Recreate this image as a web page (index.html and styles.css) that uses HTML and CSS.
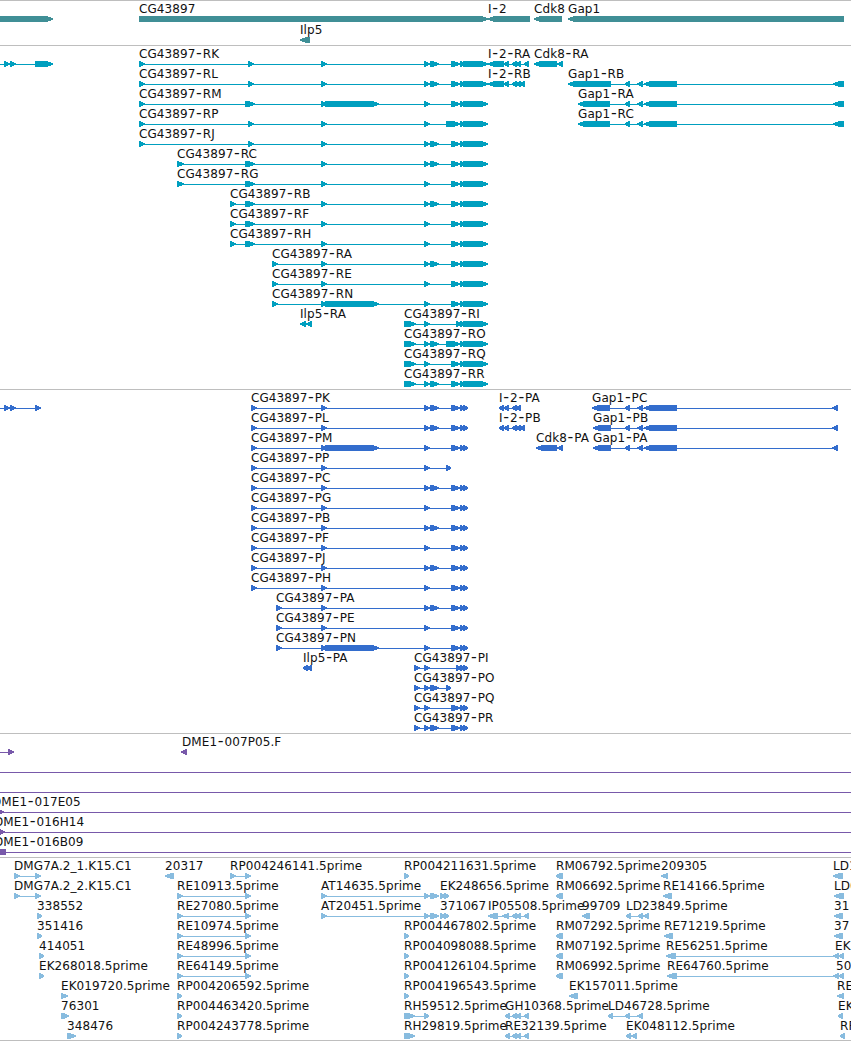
FILE: index.html
```html
<!DOCTYPE html>
<html lang="en">
<head>
<meta charset="utf-8">
<title>Genome browser</title>
<link rel="stylesheet" href="styles.css">
</head>
<body>
<main class="browser">
  <section class="track track-gene" id="gene"></section>
  <section class="track track-mrna" id="mrna"></section>
  <section class="track track-cds" id="cds"></section>
  <section class="track track-bac" id="bac"></section>
  <section class="track track-est" id="est"></section>
</main>
<script src="tracks.js"></script>
</body>
</html>
```
FILE: styles.css
```css
body {
  margin: 0;
  background: #fff;
}

.browser {
  display: flex;
  flex-direction: column;
  width: 851px;
  height: 1041px;
  overflow: hidden;
  box-sizing: border-box;
  border-bottom: 1px solid #bebebe;
}

.track {
  flex: none;
  box-sizing: border-box;
  border-top: 1px solid #bebebe;
  overflow: hidden;
}

.track-gene { height: 45px; color: #408f96; }
.track-mrna { height: 344px; color: #009fbf; }
.track-cds { height: 344px; color: #336dcd; }
.track-bac { height: 124px; color: #7859aa; }
.track-est { height: 183px; color: #88bcdf; }

.canvas {
  display: block;
  width: 851px;
  height: 100%;
}

.shape {
  fill: currentColor;
  shape-rendering: crispEdges;
}

.label {
  fill: #111;
  font: 12px "DejaVu Sans", sans-serif;
  letter-spacing: 0.08px;
}

.dash {
  font-size: 16px;
}
```
FILE: tracks.js
```js
const NS = "http://www.w3.org/2000/svg";

function node(parent, tag, attrs) {
  const el = document.createElementNS(NS, tag);
  for (const key in attrs) el.setAttribute(key, attrs[key]);
  parent.appendChild(el);
  return el;
}

// Exon with its tip in the direction of transcription.
function exon(svg, start, end, y, strand) {
  const width = end - start;
  const tip = width < 8 ? width - 1 : Math.min(6, width - 3);
  const shoulder = end - tip;
  const lower = y + 6;
  let points;
  if (strand === "=") {
    points = [[start, y], [end, y], [end, lower], [start, lower]];
  } else if (strand === "+") {
    points = [[start, y], [shoulder, y], [end, y + 2.2], [end, y + 3.8], [shoulder, lower], [start, lower]];
  } else {
    points = [[end, y], [start + tip, y], [start, y + 2.2], [start, y + 3.8], [start + tip, lower], [end, lower]];
  }
  node(svg, "polygon", { class: "shape", points: points.join(" ") });
}

// Label with wide hyphens.
function label(svg, x, y, value) {
  const text = node(svg, "text", { class: "label", x: x, y: y });
  value.split("-").forEach((part, i) => {
    if (i > 0) node(text, "tspan", { class: "dash", dx: 0.7 }).textContent = "-";
    node(text, "tspan", i > 0 ? { dx: 0.8 } : {}).textContent = part;
  });
}

// Feature: "row label x strand exons", exons as start-end pairs, "_" for no label.
function draw(id, base, step, source) {
  const svg = node(document.getElementById(id), "svg", { class: "canvas" });
  for (const line of source.trim().split("\n")) {
    const [row, name, x, strand, list] = line.trim().split(/\s+/);
    const y = base + row * step;
    if (list) {
      const exons = list.split(",").map(p => p.split(":").map(Number));
      const from = exons[0][0];
      const to = exons[exons.length - 1][1];
      node(svg, "rect", { class: "shape", x: from, y: y, width: to - from, height: 1 });
      exons.forEach(([a, b]) => exon(svg, a, b, y - 3, strand));
    }
    if (name !== "_") label(svg, x, y - 6, name);
  }
}

draw("gene", 18, 21, `
0 _ 0 + -20:53
0 CG43897 139 + 139:488
0 I-2 488 - 488:530
0 Cdk8 534 - 534:562
0 Gap1 568 - 568:844
1 Ilp5 300 - 300:310
`);

const END = "451:460,460:464,463:488";
const GAP = "625:630,637:643,644:677,833:844";
draw("mrna", 18, 20, `
0 _ 0 + -9:-4,4:10,10:16,35:53
0 CG43897-RK 139 + 139:145,248:254,321:327,424:430,430:439,${END}
1 CG43897-RL 139 + 139:145,248:254,321:327,424:430,430:439,${END}
2 CG43897-RM 139 + 139:145,245:255,321:327,325:379,424:430,${END}
3 CG43897-RP 139 + 139:145,248:254,321:327,424:430,446:460,460:464,463:488
4 CG43897-RJ 139 + 139:145,248:254,321:327,424:430,430:439,${END}
5 CG43897-RC 177 + 177:184,245:255,321:327,424:430,430:439,${END}
6 CG43897-RG 177 + 177:184,245:255,321:327,424:430,${END}
7 CG43897-RB 230 + 230:236,245:255,321:327,424:430,430:439,${END}
8 CG43897-RF 230 + 230:236,245:255,321:327,424:430,${END}
9 CG43897-RH 230 + 230:236,245:255,321:327,424:430,${END}
10 CG43897-RA 272 + 272:278,321:327,424:430,430:439,${END}
11 CG43897-RE 272 + 272:278,321:327,424:430,${END}
12 CG43897-RN 272 + 272:278,321:327,325:379,424:430,${END}
13 CG43897-RI 404 + 404:416,424:430,456:461,460:464,463:488
14 CG43897-RO 404 + 404:416,424:430,430:439,446:460,460:464,463:488
15 CG43897-RQ 404 + 404:416,424:430,${END}
16 CG43897-RR 404 + 404:416,424:430,430:439,${END}
13 Ilp5-RA 300 - 300:306,306:312
0 I-2-RA 488 - 488:504,504:509,512:517,516:521,524:529
1 I-2-RB 488 - 488:504,504:509,512:517,516:521,520:525
0 Cdk8-RA 534 - 534:557,557:563
1 Gap1-RB 568 - 568:611,${GAP}
2 Gap1-RA 578 - 578:610,${GAP}
3 Gap1-RC 578 - 578:610,${GAP}
`);

const CEND = "451:460,460:464,463:468";
const CGAP = "625:630,637:643,644:677,832:838";
draw("cds", 18, 20, `
0 _ 0 + -9:-4,4:10,10:16,35:41
0 CG43897-PK 251 + 251:257,321:327,424:430,430:439,${CEND}
1 CG43897-PL 251 + 251:257,321:327,424:430,430:439,${CEND}
2 CG43897-PM 251 + 251:257,321:327,325:379,424:430,${CEND}
3 CG43897-PP 251 + 251:257,321:327,424:430,446:451
4 CG43897-PC 251 + 251:257,321:327,424:430,430:439,${CEND}
5 CG43897-PG 251 + 251:257,321:327,424:430,${CEND}
6 CG43897-PB 251 + 251:257,321:327,424:430,430:439,${CEND}
7 CG43897-PF 251 + 251:257,321:327,424:430,${CEND}
8 CG43897-PJ 251 + 251:257,321:327,424:430,430:439,${CEND}
9 CG43897-PH 251 + 251:257,321:327,424:430,${CEND}
10 CG43897-PA 276 + 276:282,321:327,424:430,430:439,${CEND}
11 CG43897-PE 276 + 276:282,321:327,424:430,${CEND}
12 CG43897-PN 276 + 276:282,321:327,325:379,424:430,${CEND}
13 CG43897-PI 414 + 414:420,424:430,456:461,460:464,463:468
14 CG43897-PO 414 + 414:420,424:430,430:439,446:451
15 CG43897-PQ 414 + 414:420,424:430,${CEND}
16 CG43897-PR 414 + 414:420,424:430,430:439,${CEND}
13 Ilp5-PA 303 - 303:308,307:312
0 I-2-PA 499 - 499:504,504:509,512:517,516:521
1 I-2-PB 499 - 499:504,504:509,512:517,516:521,520:525
2 Cdk8-PA 536 - 536:557,557:563
0 Gap1-PC 592 - 592:610,${CGAP}
1 Gap1-PB 593 - 593:611,${CGAP}
2 Gap1-PA 593 - 593:611,${CGAP}
`);

draw("bac", 18, 20, `
0 _ 0 + -9:-4,8:14
0 DME1-007P05.F 182 - 181:187
1 _ 0 + -9:-4,860:866
2 _ 0 + -9:-4,860:866
3 DME1-017E05 -8 + -2:4,860:866
4 DME1-016H14 -6 + -1:5,860:866
5 DME1-016B09 -6 = -2:6,860:866
`);

const RE = "177:183,245:251";
const RM = "556:561,558:563";
const AT = "321:327,424:430,430:439";
const GH = "505:510,512:517,516:521,524:529";
draw("est", 18, 20, `
0 DMG7A.2_1.K15.C1 14 + 14:20,35:41
1 DMG7A.2_2.K15.C1 14 + 14:20,35:41
2 338552 37 + 37:42
3 351416 37 + 37:42
4 414051 39 + 39:44
5 EK268018.5prime 39 + 39:44
6 EK019720.5prime 61 + 61:68
7 76301 61 + 61:69
8 348476 67 + 67:76
0 20317 165 - 165:174
0 RP004246141.5prime 230 + 230:236,245:251
1 RE10913.5prime 177 + ${RE}
2 RE27080.5prime 177 + ${RE}
3 RE10974.5prime 177 + ${RE}
4 RE48996.5prime 177 + ${RE}
5 RE64149.5prime 177 + ${RE}
6 RP004206592.5prime 177 + 177:182
7 RP004463420.5prime 177 + 177:182
8 RP004243778.5prime 177 + 177:182
1 AT14635.5prime 321 + ${AT}
2 AT20451.5prime 321 + ${AT}
1 EK248656.5prime 440 + 440:445,444:449
2 371067 440 + 440:445,444:449
0 RP004211631.5prime 404 + 404:409
3 RP004467802.5prime 404 + 404:409
4 RP004098088.5prime 404 + 404:409
5 RP004126104.5prime 404 + 404:409
6 RP004196543.5prime 404 + 404:409
7 RH59512.5prime 404 + 404:415,424:429
8 RH29819.5prime 404 + 404:415
2 IP05508.5prime 488 - 488:498,502:509,512:517,516:521,524:529
7 GH10368.5prime 505 - ${GH}
8 RE32139.5prime 505 - ${GH}
0 RM06792.5prime 556 - ${RM}
1 RM06692.5prime 556 - ${RM}
3 RM07292.5prime 556 - ${RM}
4 RM07192.5prime 556 - ${RM}
5 RM06992.5prime 556 - ${RM}
2 99709 582 - 582:590
6 EK157011.5prime 569 - 569:578
7 LD46728.5prime 608 - 608:613,625:630,637:643
2 LD23849.5prime 626 - 626:631,638:643,643:649
8 EK048112.5prime 626 - 626:631,631:637
0 209305 661 - 661:668
1 RE14166.5prime 663 - 663:672
3 RE71219.5prime 664 - 664:673
4 RE56251.5prime 666 - 666:676,833:839,838:844
5 RE64760.5prime 667 - 667:677,833:839,838:844
0 LD1 833 - 833:843
1 LD0 834 - 834:844
2 31 834 - 834:843
3 37 834 - 834:843
4 EK 835
5 50 836
6 RE 837 - 837:844
7 EK 838 - 838:843
8 RP 840 - 840:845
`);
```
